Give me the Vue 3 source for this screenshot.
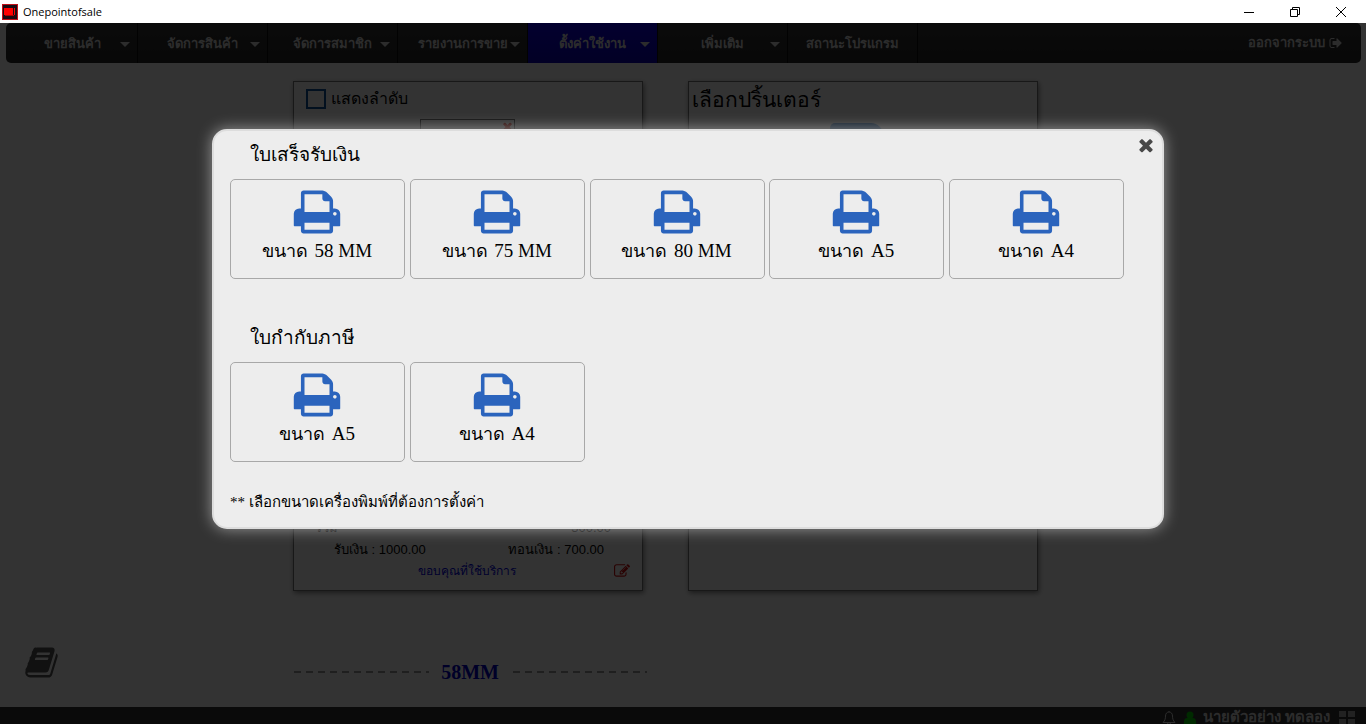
<script setup>
const menu = [
  { label: 'ขายสินค้า', drop: true },
  { label: 'จัดการสินค้า', drop: true },
  { label: 'จัดการสมาชิก', drop: true },
  { label: 'รายงานการขาย', drop: true },
  { label: 'ตั้งค่าใช้งาน', drop: true, active: true },
  { label: 'เพิ่มเติม', drop: true },
  { label: 'สถานะโปรแกรม' },
]
const groups = [
  { title: 'ใบเสร็จรับเงิน', sizes: ['58 MM', '75 MM', '80 MM', 'A5', 'A4'] },
  { title: 'ใบกำกับภาษี', sizes: ['A5', 'A4'] },
]
const icons = {
  print: 'M448 1536h896v-256h-896v256zm0-640h896v-384h-160q-40 0-68-28t-28-68v-160h-640v640zm1152 64q0-26-19-45t-45-19-45 19-19 45 19 45 45 19 45-19 19-45zm128 0v416q0 13-9.5 22.5t-22.5 9.5h-224v160q0 40-28 68t-68 28h-960q-40 0-68-28t-28-68v-160h-224q-13 0-22.5-9.5t-9.5-22.5v-416q0-79 56.5-135.5t135.5-56.5h64v-544q0-40 28-68t68-28h672q40 0 88 20t76 48l152 152q28 28 48 76t20 88v256h64q79 0 135.5 56.5t56.5 135.5z',
  times: 'M1490 1322q0 40-28 68l-136 136q-28 28-68 28t-68-28l-294-294-294 294q-28 28-68 28t-68-28l-136-136q-28-28-28-68t28-68l294-294-294-294q-28-28-28-68t28-68l136-136q28-28 68-28t68 28l294 294 294-294q28-28 68-28t68 28l136 136q28 28 28 68t-28 68l-294 294 294 294q28 28 28 68z',
  book: 'M1703 478q40 57 18 129l-275 906q-19 64-76.5 107.5t-122.5 43.5h-923q-77 0-148.5-53.5t-99.5-131.5q-24-67-2-127 0-4 3-27t4-37q1-8-3-21.5t-3-19.5q2-11 8-21t16.5-23.5 16.5-23.5q23-38 45-91.5t30-91.5q3-10 .5-30t-.5-28q3-11 17-28t17-23q21-36 42-92t25-90q1-9-2.5-32t.5-28q4-13 22-30.5t22-22.5q19-26 42.5-84.5t27.5-96.5q1-8-3-25.5t-2-26.5q2-8 9-18t18-23 17-21q8-12 16.5-30.5t15-35 16-36 19.5-32 26.5-23.5 36-11.5 47.5 5.5l-1 3q38-9 51-9h761q74 0 114 56t18 130l-274 906q-36 119-71.5 153.5t-128.5 34.5h-869q-27 0-38 15-11 16-1 43 24 70 144 70h923q29 0 56-15.5t35-41.5l300-987q7-22 5-57 38 15 59 43zm-1064 2q-4 13 2 22.5t20 9.5h608q13 0 25.5-9.5t16.5-22.5l21-64q4-13-2-22.5t-20-9.5h-608q-13 0-25.5 9.5t-16.5 22.5zm-83 256q-4 13 2 22.5t20 9.5h608q13 0 25.5-9.5t16.5-22.5l21-64q4-13-2-22.5t-20-9.5h-608q-13 0-25.5 9.5t-16.5 22.5z',
  signout: 'M704 1440q0 4 1 20t.5 26.5-3 23.5-10 19.5-20.5 6.5h-320q-119 0-203.5-84.5t-84.5-203.5v-704q0-119 84.5-203.5t203.5-84.5h320q13 0 22.5 9.5t9.5 22.5q0 4 1 20t.5 26.5-3 23.5-10 19.5-20.5 6.5h-320q-66 0-113 47t-47 113v704q0 66 47 113t113 47h312l11.5 1 11.5 3 8 5.5 7 9 2 13.5zm928-544q0 26-19 45l-544 544q-19 19-45 19t-45-19-19-45v-288h-448q-26 0-45-19t-19-45v-384q0-26 19-45t45-19h448v-288q0-26 19-45t45-19 45 19l544 544q19 19 19 45z',
  edit: 'M888 1184l116-116-152-152-116 116v56h96v96h56zm440-720q-16-16-33 1l-350 350q-17 17-1 33t33-1l350-350q17-17 1-33zm80 594v190q0 119-84.5 203.5t-203.5 84.5h-832q-119 0-203.5-84.5t-84.5-203.5v-832q0-119 84.5-203.5t203.5-84.5h832q63 0 117 25 15 7 18 23 3 17-9 29l-49 49q-14 14-32 8-23-6-45-6h-832q-66 0-113 47t-47 113v832q0 66 47 113t113 47h832q66 0 113-47t47-113v-126q0-13 9-22l64-64q15-15 35-7t20 29zm-96-738l288 288-672 672h-288v-288zm444 132l-92 92-288-288 92-92q28-28 68-28t68 28l152 152q28 28 28 68t-28 68z',
}
</script>

<template>
  <div class="window">
    <header class="titlebar">
      <svg class="logo" viewBox="0 0 16 16" aria-hidden="true">
        <rect width="16" height="16" fill="#c01018" />
        <rect x="1" y="1" width="14" height="14" fill="#1c0a12" />
        <rect x="2" y="4" width="9" height="7" fill="#f00" />
        <rect x="12" y="4" width="1" height="7" fill="#f00" />
        <rect x="3" y="11" width="9" height="1" fill="#a00" />
      </svg>
      <span class="app-name">Onepointofsale</span>
      <div class="win-buttons">
        <button type="button" aria-label="Minimize">
          <svg viewBox="0 0 12 12"><path d="M1 6.500h10" /></svg>
        </button>
        <button type="button" aria-label="Restore">
          <svg viewBox="0 0 12 12"><path d="M1.500 3.500h7v7h-7zM3.500 3.500v-2h7v7h-2" /></svg>
        </button>
        <button type="button" aria-label="Close">
          <svg viewBox="0 0 12 12"><path d="M1 1l10 10M11 1l-10 10" /></svg>
        </button>
      </div>
    </header>

    <div class="client">
      <nav class="menubar">
        <a v-for="item in menu" :key="item.label" href="#" class="menu-item" :class="{ active: item.active }">
          {{ item.label }}<i v-if="item.drop" class="caret"></i>
        </a>
        <a href="#" class="logout">
          ออกจากระบบ
          <svg viewBox="0 0 1792 1792" aria-hidden="true"><path :d="icons.signout" /></svg>
        </a>
      </nav>

      <main class="workspace">
        <section class="panel receipt">
          <label class="order-check"><input type="checkbox" />แสดงลำดับ</label>
          <div class="shop-logo">
            <svg viewBox="0 0 1792 1792" aria-hidden="true"><path :d="icons.times" /></svg>
          </div>
          <div class="sum-row"><span>รวม</span><span>300.00</span></div>
          <div class="paid-row"><span>รับเงิน : 1000.00</span><span>ทอนเงิน : 700.00</span></div>
          <div class="thanks">
            <span>ขอบคุณที่ใช้บริการ</span>
            <button type="button" class="edit" aria-label="แก้ไข">
              <svg viewBox="0 0 1792 1792"><path :d="icons.edit" /></svg>
            </button>
          </div>
        </section>
        <section class="panel printer">
          <h2>เลือกปริ้นเตอร์</h2>
          <div class="printer-shape"></div>
        </section>
        <div class="divider">
          <svg class="dashes" aria-hidden="true"><line x1="1" y1="1" x2="100%" y2="1" /></svg>
          <strong>58MM</strong>
          <svg class="dashes" aria-hidden="true"><line x1="2" y1="1" x2="100%" y2="1" /></svg>
        </div>
      </main>

      <div class="manual">
        <button type="button" aria-label="คู่มือ">
          <svg viewBox="0 0 1792 1792"><path :d="icons.book" /></svg>
        </button>
      </div>

      <footer class="statusbar">
        <svg class="bell" viewBox="0 0 16 16" aria-hidden="true">
          <path d="M2 12.500h12c-2-2-2.500-4-2.500-6.500 0-2.500-1.500-4-3.500-4s-3.500 1.500-3.500 4c0 2.500-.5 4.500-2.500 6.500zM8 2v-1M6.500 13c0 2 3 2 3 0" />
        </svg>
        <svg class="person" viewBox="0 0 16 16" aria-hidden="true">
          <circle cx="8" cy="4.500" r="4" /><path d="M1 16v-3q0-5 4-5h6q4 0 4 5v3z" />
        </svg>
        <span>นายตัวอย่าง ทดลอง</span>
        <svg class="tiles" viewBox="0 0 16 16" aria-hidden="true">
          <path d="M0 1h7v6h-7zM9 1h7v6h-7zM0 9h7v6h-7zM9 9h7v6h-7z" />
        </svg>
      </footer>

      <div class="overlay">
        <div class="modal" role="dialog" aria-modal="true">
          <button type="button" class="close" aria-label="ปิด">
            <svg viewBox="0 0 1792 1792"><path :d="icons.times" /></svg>
          </button>
          <section v-for="g in groups" :key="g.title" class="group">
            <h3>{{ g.title }}</h3>
            <div class="cards">
              <button v-for="s in g.sizes" :key="s" type="button" class="card">
                <svg viewBox="0 0 1792 1792" aria-hidden="true"><path :d="icons.print" /></svg>
                <span class="size"><span class="word">ขนาด</span> {{ s }}</span>
              </button>
            </div>
          </section>
          <p class="note">** เลือกขนาดเครื่องพิมพ์ที่ต้องการตั้งค่า</p>
        </div>
      </div>
    </div>
  </div>
</template>

<style>
html,
body {
  margin: 0;
  overflow: hidden;
}
</style>

<style scoped>
.window {
  display: flex;
  flex-direction: column;
  height: 100vh;
  background: #fff;
  color: #000;
  font-family: "Liberation Serif", serif;
}
.window * {
  box-sizing: border-box;
}
svg {
  display: block;
  fill: currentColor;
}
button {
  margin: 0;
  padding: 0;
  border: 0;
  background: none;
  color: inherit;
  font: inherit;
}
a {
  color: inherit;
  text-decoration: none;
}

.titlebar {
  display: flex;
  align-items: center;
  height: 23px;
  padding-left: 2px;
  font: 11px/22px "Open Sans", sans-serif;
}
.logo {
  width: 16px;
  height: 16px;
  margin-right: 5px;
}
.win-buttons {
  display: flex;
  margin-left: auto;
  padding-right: 2px;
}
.win-buttons button {
  display: grid;
  place-items: center;
  width: 46px;
  height: 21px;
}
.win-buttons svg {
  width: 12px;
  height: 12px;
  fill: none;
  stroke: #000;
}

.client {
  position: relative;
  display: flex;
  flex: 1;
  flex-direction: column;
  min-height: 0;
  overflow: hidden;
}
.menubar {
  display: flex;
  height: 40px;
  margin: 0 5px 0 6px;
  padding-left: 2px;
  overflow: hidden;
  border-radius: 5px;
  background: linear-gradient(#363636, #282828);
  color: #ddd;
  font: bold 13px/42px "Liberation Sans", sans-serif;
}
.menu-item {
  position: relative;
  width: 130px;
  border-right: 1px solid #0a0a0a;
  text-align: center;
}
.menu-item.active {
  background: linear-gradient(#1200e8, #0a00b8);
}
.caret {
  position: absolute;
  top: 19px;
  right: 7px;
  border: 5px solid transparent;
  border-top-color: #ddd;
  border-bottom: 0;
}
.logout {
  display: flex;
  align-items: center;
  gap: 4px;
  margin-left: auto;
  padding-right: 18px;
}
.logout svg {
  width: 14px;
  height: 14px;
}

.workspace {
  display: grid;
  flex: 1;
  grid-template-columns: 350px 350px;
  grid-template-rows: 510px auto;
  justify-content: center;
  column-gap: 45px;
  padding: 18px 35px 0 0;
}
.panel {
  border: 1px solid #777;
  box-shadow: 1px 2px 5px #888;
}
.receipt {
  display: flex;
  flex-direction: column;
  font: 13px/22px "Liberation Sans", sans-serif;
}
.order-check {
  display: flex;
  align-items: center;
  gap: 5px;
  height: 34px;
  padding-left: 12px;
  font-size: 16px;
}
.order-check input {
  width: 20px;
  height: 20px;
  margin: 0;
  appearance: none;
  border: 2px solid #0a4f9c;
}
.shop-logo {
  display: flex;
  justify-content: flex-end;
  align-items: flex-start;
  width: 95px;
  height: 70px;
  margin: 3px 0 auto 126px;
  border: 1px solid #555;
  color: #e03020;
}
.shop-logo svg {
  width: 13px;
  height: 13px;
}
.sum-row,
.paid-row {
  display: flex;
  justify-content: space-between;
}
.sum-row {
  padding: 0 31px 0 21px;
}
.paid-row {
  padding: 0 38px 0 40px;
}
.thanks {
  position: relative;
  height: 29px;
  padding-right: 2px;
  color: #0000e0;
  font-size: 12px;
  line-height: 20px;
  text-align: center;
}
.edit {
  position: absolute;
  top: 2px;
  right: 12px;
  color: #d01010;
}
.edit svg {
  width: 16px;
  height: 16px;
}
.printer h2 {
  margin: 0;
  padding-left: 3px;
  font: 21px/36px "Liberation Sans", sans-serif;
}
.printer-shape {
  width: 53px;
  height: 40px;
  margin: 5px auto 0 141px;
  border-radius: 5px 12px 0 0;
  background: #5a9ce0;
}
.divider {
  display: flex;
  align-items: center;
  align-self: start;
  width: 354px;
  margin-top: 69px;
  color: #0000c8;
  font-size: 20px;
  line-height: 24px;
}
.divider strong {
  padding: 0 12px;
}
.dashes {
  flex: 1;
  min-width: 0;
  height: 2px;
}
.dashes line {
  stroke: #999;
  stroke-width: 2px;
  stroke-dasharray: 7px 5px;
}

.manual {
  position: absolute;
  bottom: 40px;
  left: 24px;
  color: #555;
}
.manual svg {
  width: 35px;
  height: 35px;
}
.statusbar {
  display: flex;
  flex: none;
  justify-content: flex-end;
  gap: 6px;
  height: 17px;
  padding: 0 11px 0 0;
  background: #333;
  color: #ddd;
  font: bold 15px/20px "Liberation Sans", sans-serif;
}
.statusbar svg {
  flex: none;
  width: 16px;
  height: 16px;
  margin-top: 3px;
}
.statusbar .bell {
  fill: none;
  stroke: currentColor;
}
.statusbar .person {
  width: 14px;
  color: #00d000;
}
.statusbar .tiles {
  margin-left: 3px;
  color: #aaa;
}

.overlay {
  position: absolute;
  inset: 0;
  display: flex;
  justify-content: center;
  align-items: flex-start;
  padding: 106px 0 0 10px;
  background: rgba(0, 0, 0, 0.8);
}
.modal {
  position: relative;
  width: 952px;
  max-width: 94%;
  padding: 0 16px 13px;
  border: 2px solid #ddd;
  border-radius: 15px;
  background: #ededed;
  box-shadow: 0 0 15px #999;
}
.close {
  position: absolute;
  top: 4px;
  right: 6px;
  color: #484848;
}
.close svg {
  width: 20px;
  height: 20px;
}
.group + .group {
  margin-top: 35px;
}
.group h3 {
  margin: 0;
  padding-left: 20px;
  font-size: 19px;
  font-weight: 400;
  line-height: 48px;
}
.cards {
  display: grid;
  grid-template-columns: repeat(5, 175px);
  justify-content: space-between;
  max-width: 894px;
}
.card {
  display: flex;
  flex-direction: column;
  align-items: center;
  height: 100px;
  padding: 7px 1px 0 0;
  border: 1px solid #a8a8a8;
  border-radius: 5px;
  font-size: 19px;
  line-height: 28px;
}
.card svg {
  width: 50px;
  height: 50px;
  color: #2b64bd;
}
.word {
  margin-right: 2px;
  font-size: 18px;
}
.note {
  margin: 28px 0 0;
  font-size: 15px;
  line-height: 24px;
}
</style>
